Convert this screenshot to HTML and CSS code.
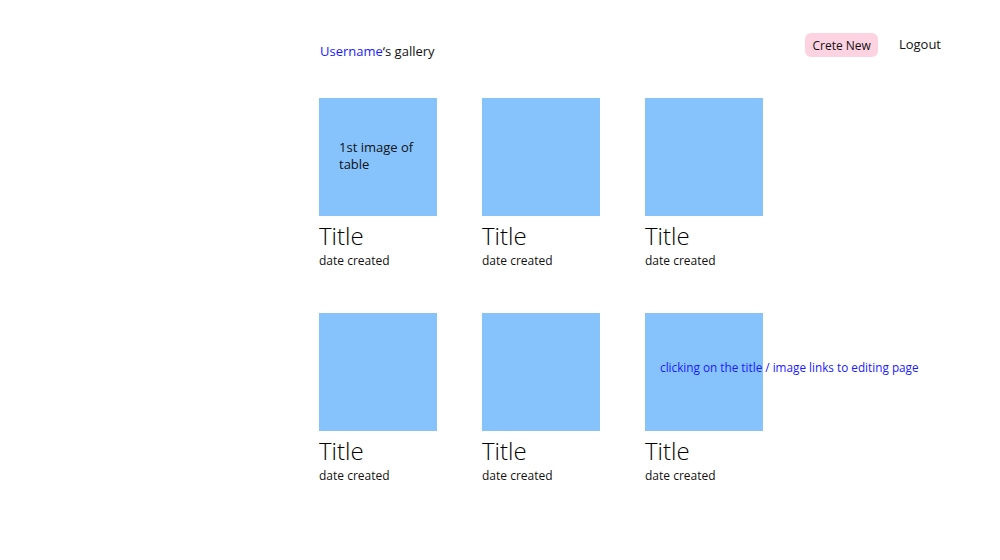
FILE: index.html
```html
<!DOCTYPE html>
<html>
<head>
<meta charset="utf-8">
<link rel="stylesheet" href="styles.css">
</head>
<body>
<div class="page">
  <header class="header">
    <div class="gallery-name"><span class="user">Username</span>‘s gallery</div>
    <nav class="actions">
      <button class="create">Crete New</button>
      <a class="logout">Logout</a>
    </nav>
  </header>
  <main class="grid">
    <div class="card">
      <div class="thumb"><span class="thumb-note">1st image of table</span></div>
      <div class="title">Title</div>
      <div class="date">date created</div>
    </div>
    <div class="card">
      <div class="thumb"></div>
      <div class="title">Title</div>
      <div class="date">date created</div>
    </div>
    <div class="card">
      <div class="thumb"></div>
      <div class="title">Title</div>
      <div class="date">date created</div>
    </div>
    <div class="card">
      <div class="thumb"></div>
      <div class="title">Title</div>
      <div class="date">date created</div>
    </div>
    <div class="card">
      <div class="thumb"></div>
      <div class="title">Title</div>
      <div class="date">date created</div>
    </div>
    <div class="card">
      <div class="thumb annotated">
        <span class="annotation">clicking on the title / image links to editing page</span>
      </div>
      <div class="title">Title</div>
      <div class="date">date created</div>
    </div>
  </main>
</div>
</body>
</html>
```
FILE: styles.css
```css
html, body {
  margin: 0;
  padding: 0;
  background: #ffffff;
}
body {
  font-family: "Open Sans", "Noto Sans", sans-serif;
  color: #111;
}
.page {
  width: 622px;
  margin-left: 319px;
  padding-top: 33px;
}
.header {
  display: flex;
  justify-content: space-between;
  align-items: flex-start;
  height: 65px;
}
.gallery-name {
  font-size: 13px;
  line-height: 18px;
  padding-top: 9px;
  padding-left: 1px;
}
.user {
  color: #1a1aff;
}
.actions {
  display: flex;
  align-items: center;
  gap: 21px;
}
.create {
  font-family: inherit;
  font-size: 12px;
  background: #fdd3e2;
  border: none;
  border-radius: 6px;
  padding: 0 7px 0 8px;
  height: 24px;
  color: #111;
}
.logout {
  font-size: 13px;
  color: #111;
  margin-top: -2px;
}
.grid {
  display: grid;
  grid-template-columns: repeat(3, 118px);
  column-gap: 45px;
  row-gap: 44px;
}
.card {
  display: flex;
  flex-direction: column;
}
.thumb {
  width: 118px;
  height: 118px;
  background: #86c3fd;
  position: relative;
}
.thumb-note {
  display: block;
  padding: 41px 20px 0 20px;
  font-size: 13px;
  line-height: 17px;
}
.annotation {
  position: absolute;
  left: 15px;
  top: 46px;
  white-space: nowrap;
  font-size: 11.75px;
  color: #1a1aff;
}
.title {
  font-size: 24px;
  font-weight: 300;
  color: #000;
  line-height: 28px;
  margin-top: 6px;
}
.date {
  font-size: 12px;
  line-height: 16px;
  margin-top: 3px;
}
```
